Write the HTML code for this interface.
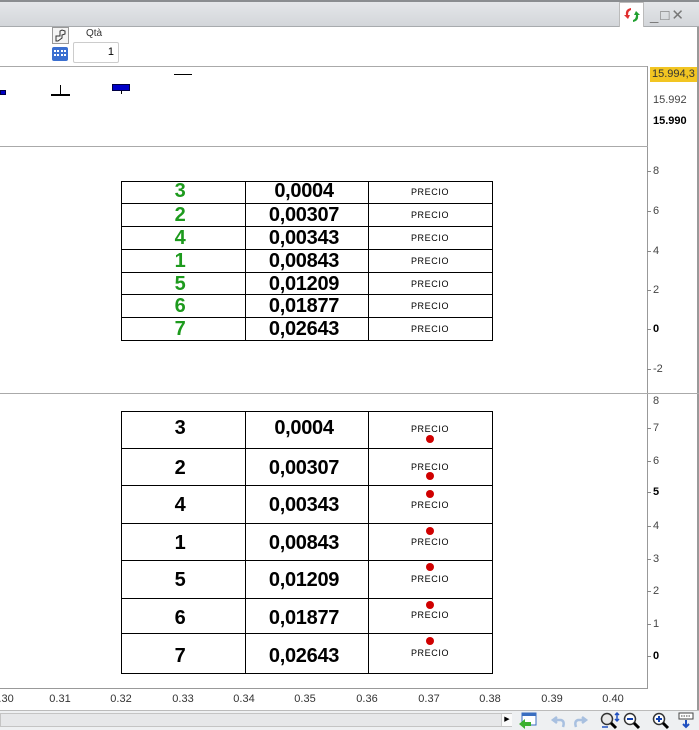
<!DOCTYPE html>
<html><head><meta charset="utf-8"><style>
*{margin:0;padding:0;box-sizing:border-box}
body{width:699px;height:730px;overflow:hidden;background:#fff;font-family:"Liberation Sans",Arial,sans-serif;position:relative}
.a{position:absolute}
.t{font-size:11px;color:#333}
.cell{position:absolute;text-align:center;font-weight:bold;font-size:20px;color:#000;margin-left:-3px;letter-spacing:-0.3px}
.pr{position:absolute;font-size:9px;letter-spacing:0.6px;color:#000;text-align:center;width:124px}
.dot{position:absolute;width:8px;height:8px;border-radius:50%;background:#d00000}
.ax{position:absolute;left:653px;font-size:11px;color:#444}
.tk{position:absolute;left:647px;width:4px;height:1px;background:#888}
.xl{position:absolute;top:693px;font-size:11px;color:#333;width:40px;text-align:center}
</style></head><body>
<!-- title bar -->
<div class="a" style="left:0;top:0;width:699px;height:27px;background:linear-gradient(#e4e6e9,#d3d6da);border-top:2px solid #8a8d90;border-bottom:1px solid #a8abae"></div>
<div class="a" style="left:619px;top:2px;width:25px;height:25px;background:#fff;border:1px solid #bbb;border-bottom:none"></div>
<svg class="a" style="left:622px;top:5px" width="20" height="20" viewBox="0 0 20 20"><path d="M9 3 Q3 4 4 10 L2 10 L6 14 L8 10 L6 10 Q6 6 9 5Z" fill="#e03030"/><path d="M11 17 Q17 16 16 10 L18 10 L14 6 L12 10 L14 10 Q14 14 11 15Z" fill="#20a030"/></svg>
<div class="a" style="left:650px;top:6px;font-size:15px;color:#777;letter-spacing:2px">_□✕</div>
<!-- toolbar -->
<div class="a" style="left:52px;top:27px;width:17px;height:17px;border:1px solid #999;background:#f4f4f4"></div>
<svg class="a" style="left:53px;top:28px" width="15" height="15" viewBox="0 0 15 15"><path d="M3 13 L3 8 L7 8 L7 3 L9 2 L12 3 L12 6 L9 7 L9 10 L5 13Z" fill="none" stroke="#333" stroke-width="1"/></svg>
<div class="a" style="left:52px;top:47px;width:16px;height:14px;background:#3b6fd0;border-radius:2px"><div style="margin:3px 2px;height:6px;border-top:2px dotted #fff;border-bottom:2px dotted #fff"></div></div>
<div class="a t" style="left:86px;top:28px;font-size:10px">Qtà</div>
<div class="a" style="left:73px;top:42px;width:46px;height:21px;border:1px solid #ccc;border-radius:2px;font-size:11px;text-align:right;padding:3px 4px 0 0">1</div>
<div class="a" style="left:0;top:66px;width:648px;height:1px;background:#aaa"></div>
<!-- panel 1 -->
<div class="a" style="left:0;top:90px;width:6px;height:5px;background:#0000c8;border:1px solid #004"></div>
<div class="a" style="left:60px;top:85px;width:1px;height:10px;background:#000"></div>
<div class="a" style="left:51px;top:94px;width:19px;height:2px;background:#000"></div>
<div class="a" style="left:112px;top:84px;width:18px;height:7px;background:#0000c8;border:1px solid #004"></div>
<div class="a" style="left:121px;top:91px;width:1px;height:3px;background:#000"></div>
<div class="a" style="left:174px;top:74px;width:18px;height:1px;background:#000"></div>
<div class="a" style="left:647px;top:66px;width:1px;height:623px;background:#999"></div>
<div class="a" style="left:697px;top:27px;width:2px;height:703px;background:#999"></div>
<div class="a" style="left:650px;top:67px;width:47px;height:15px;background:#f2c522;font-size:11px;color:#333;padding-left:2px;line-height:15px">15.994,3</div>
<div class="ax" style="top:94px">15.992</div>
<div class="ax" style="top:115px;font-weight:bold;color:#000">15.990</div>
<div class="a" style="left:0;top:146px;width:648px;height:1px;background:#aaa"></div>
<!-- panel 2 axis -->
<div class="ax" style="top:165px">8</div><div class="tk" style="top:171px"></div>
<div class="ax" style="top:205px">6</div><div class="tk" style="top:211px"></div>
<div class="ax" style="top:245px">4</div><div class="tk" style="top:251px"></div>
<div class="ax" style="top:284px">2</div><div class="tk" style="top:290px"></div>
<div class="ax" style="top:323px;font-weight:bold;color:#000">0</div><div class="tk" style="top:329px"></div>
<div class="ax" style="top:363px">-2</div><div class="tk" style="top:369px"></div>
<div class="a" style="left:0;top:393px;width:699px;height:1px;background:#aaa"></div>
<!-- panel 3 axis -->
<div class="ax" style="top:395px">8</div>
<div class="ax" style="top:422px">7</div><div class="tk" style="top:428px"></div>
<div class="ax" style="top:455px">6</div><div class="tk" style="top:461px"></div>
<div class="ax" style="top:486px;font-weight:bold;color:#000">5</div><div class="tk" style="top:492px"></div>
<div class="ax" style="top:520px">4</div><div class="tk" style="top:526px"></div>
<div class="ax" style="top:553px">3</div><div class="tk" style="top:559px"></div>
<div class="ax" style="top:585px">2</div><div class="tk" style="top:591px"></div>
<div class="ax" style="top:618px">1</div><div class="tk" style="top:624px"></div>
<div class="ax" style="top:650px;font-weight:bold;color:#000">0</div><div class="tk" style="top:656px"></div>
<!-- x axis -->
<div class="a" style="left:0;top:688px;width:648px;height:1px;background:#999"></div>
<div class="xl" style="left:-17px">0.30</div>
<div class="xl" style="left:40px">0.31</div>
<div class="xl" style="left:101px">0.32</div>
<div class="xl" style="left:163px">0.33</div>
<div class="xl" style="left:224px">0.34</div>
<div class="xl" style="left:285px">0.35</div>
<div class="xl" style="left:347px">0.36</div>
<div class="xl" style="left:409px">0.37</div>
<div class="xl" style="left:470px">0.38</div>
<div class="xl" style="left:532px">0.39</div>
<div class="xl" style="left:593px">0.40</div>
<!-- scrollbar -->
<div class="a" style="left:0;top:710px;width:699px;height:20px;background:#eef0f2;border-top:1px solid #bbb"></div>
<div class="a" style="left:0;top:713px;width:512px;height:14px;background:#e6e7e9;border:1px solid #c4c4c4"></div>
<div class="a" style="left:501px;top:714px;width:11px;height:12px;background:#fafafa;border-left:1px solid #ccc;font-size:7px;text-align:center;line-height:12px">▶</div>
<svg class="a" style="left:517px;top:711px" width="180" height="19" viewBox="0 0 180 19">
<rect x="5" y="2" width="14" height="12" fill="#fff" stroke="#3a6ec0"/><rect x="5" y="2" width="14" height="3" fill="#3a6ec0"/><path d="M2 13 L8 8 L8 11 L14 11 L14 15 L8 15 L8 18Z" fill="#3cb030"/>
<path d="M40 6 L36 9 L40 12 M36 9 L44 9 Q48 10 46 16" fill="none" stroke="#a8c0e0" stroke-width="2.5"/>
<path d="M65 6 L69 9 L65 12 M69 9 L61 9 Q57 10 59 16" fill="none" stroke="#a8c0e0" stroke-width="2.5"/>
<circle cx="90" cy="8" r="5.5" fill="#e8e8e8" stroke="#333" stroke-width="1.5"/><path d="M94 12 L99 17" stroke="#000" stroke-width="3"/><path d="M100 2 V10 M98 4 L100 2 L102 4 M98 8 L100 10 L102 8 M85 16 H91" stroke="#2050c0" stroke-width="1.5" fill="none"/>
<circle cx="113" cy="8" r="5.5" fill="#fff" stroke="#333" stroke-width="1.5"/><path d="M110 8 H116" stroke="#1040b0" stroke-width="2"/><path d="M117 12 L122 17" stroke="#000" stroke-width="3"/>
<circle cx="142" cy="8" r="5.5" fill="#fff" stroke="#333" stroke-width="1.5"/><path d="M139 8 H145 M142 5 V11" stroke="#1040b0" stroke-width="2"/><path d="M146 12 L151 17" stroke="#000" stroke-width="3"/>
<rect x="162" y="2" width="14" height="6" fill="#fff" stroke="#444"/><path d="M164 5 H174" stroke="#444" stroke-dasharray="1.5 1"/><path d="M169 9 V16 M166 13 L169 16 L172 13" stroke="#2050c0" stroke-width="2" fill="none"/>
</svg>

<!-- table 1 -->
<div class="a" style="left:121px;top:181px;width:372px;height:160px;border:1px solid #000"></div>
<div class="a" style="left:245px;top:181px;width:1px;height:160px;background:#000"></div>
<div class="a" style="left:368px;top:181px;width:1px;height:160px;background:#000"></div>
<div class="a" style="left:121px;top:203px;width:372px;height:1px;background:#000"></div>
<div class="a" style="left:121px;top:226px;width:372px;height:1px;background:#000"></div>
<div class="a" style="left:121px;top:249px;width:372px;height:1px;background:#000"></div>
<div class="a" style="left:121px;top:272px;width:372px;height:1px;background:#000"></div>
<div class="a" style="left:121px;top:294px;width:372px;height:1px;background:#000"></div>
<div class="a" style="left:121px;top:317px;width:372px;height:1px;background:#000"></div>
<div class="cell" style="left:121px;top:180px;width:124px;color:#1d9a1d">3</div><div class="cell" style="left:245px;top:180px;width:124px">0,0004</div><div class="pr" style="left:368px;top:187px">PRECIO</div>
<div class="cell" style="left:121px;top:204px;width:124px;color:#1d9a1d">2</div><div class="cell" style="left:245px;top:204px;width:124px">0,00307</div><div class="pr" style="left:368px;top:210px">PRECIO</div>
<div class="cell" style="left:121px;top:227px;width:124px;color:#1d9a1d">4</div><div class="cell" style="left:245px;top:227px;width:124px">0,00343</div><div class="pr" style="left:368px;top:233px">PRECIO</div>
<div class="cell" style="left:121px;top:250px;width:124px;color:#1d9a1d">1</div><div class="cell" style="left:245px;top:250px;width:124px">0,00843</div><div class="pr" style="left:368px;top:256px">PRECIO</div>
<div class="cell" style="left:121px;top:273px;width:124px;color:#1d9a1d">5</div><div class="cell" style="left:245px;top:273px;width:124px">0,01209</div><div class="pr" style="left:368px;top:279px">PRECIO</div>
<div class="cell" style="left:121px;top:295px;width:124px;color:#1d9a1d">6</div><div class="cell" style="left:245px;top:295px;width:124px">0,01877</div><div class="pr" style="left:368px;top:301px">PRECIO</div>
<div class="cell" style="left:121px;top:318px;width:124px;color:#1d9a1d">7</div><div class="cell" style="left:245px;top:318px;width:124px">0,02643</div><div class="pr" style="left:368px;top:324px">PRECIO</div>

<!-- table 2 -->
<div class="a" style="left:121px;top:411px;width:372px;height:263px;border:1px solid #000"></div>
<div class="a" style="left:245px;top:411px;width:1px;height:263px;background:#000"></div>
<div class="a" style="left:368px;top:411px;width:1px;height:263px;background:#000"></div>
<div class="a" style="left:121px;top:448px;width:372px;height:1px;background:#000"></div>
<div class="a" style="left:121px;top:485px;width:372px;height:1px;background:#000"></div>
<div class="a" style="left:121px;top:523px;width:372px;height:1px;background:#000"></div>
<div class="a" style="left:121px;top:560px;width:372px;height:1px;background:#000"></div>
<div class="a" style="left:121px;top:598px;width:372px;height:1px;background:#000"></div>
<div class="a" style="left:121px;top:633px;width:372px;height:1px;background:#000"></div>
<div class="cell" style="left:121px;top:417px;width:124px">3</div><div class="cell" style="left:245px;top:417px;width:124px">0,0004</div><div class="pr" style="left:368px;top:424px">PRECIO</div><div class="dot" style="left:426px;top:435px"></div>
<div class="cell" style="left:121px;top:457px;width:124px">2</div><div class="cell" style="left:245px;top:457px;width:124px">0,00307</div><div class="pr" style="left:368px;top:462px">PRECIO</div><div class="dot" style="left:426px;top:472px"></div>
<div class="cell" style="left:121px;top:494px;width:124px">4</div><div class="cell" style="left:245px;top:494px;width:124px">0,00343</div><div class="pr" style="left:368px;top:500px">PRECIO</div><div class="dot" style="left:426px;top:490px"></div>
<div class="cell" style="left:121px;top:532px;width:124px">1</div><div class="cell" style="left:245px;top:532px;width:124px">0,00843</div><div class="pr" style="left:368px;top:537px">PRECIO</div><div class="dot" style="left:426px;top:527px"></div>
<div class="cell" style="left:121px;top:569px;width:124px">5</div><div class="cell" style="left:245px;top:569px;width:124px">0,01209</div><div class="pr" style="left:368px;top:574px">PRECIO</div><div class="dot" style="left:426px;top:563px"></div>
<div class="cell" style="left:121px;top:607px;width:124px">6</div><div class="cell" style="left:245px;top:607px;width:124px">0,01877</div><div class="pr" style="left:368px;top:610px">PRECIO</div><div class="dot" style="left:426px;top:601px"></div>
<div class="cell" style="left:121px;top:645px;width:124px">7</div><div class="cell" style="left:245px;top:645px;width:124px">0,02643</div><div class="pr" style="left:368px;top:648px">PRECIO</div><div class="dot" style="left:426px;top:637px"></div>
</body></html>
